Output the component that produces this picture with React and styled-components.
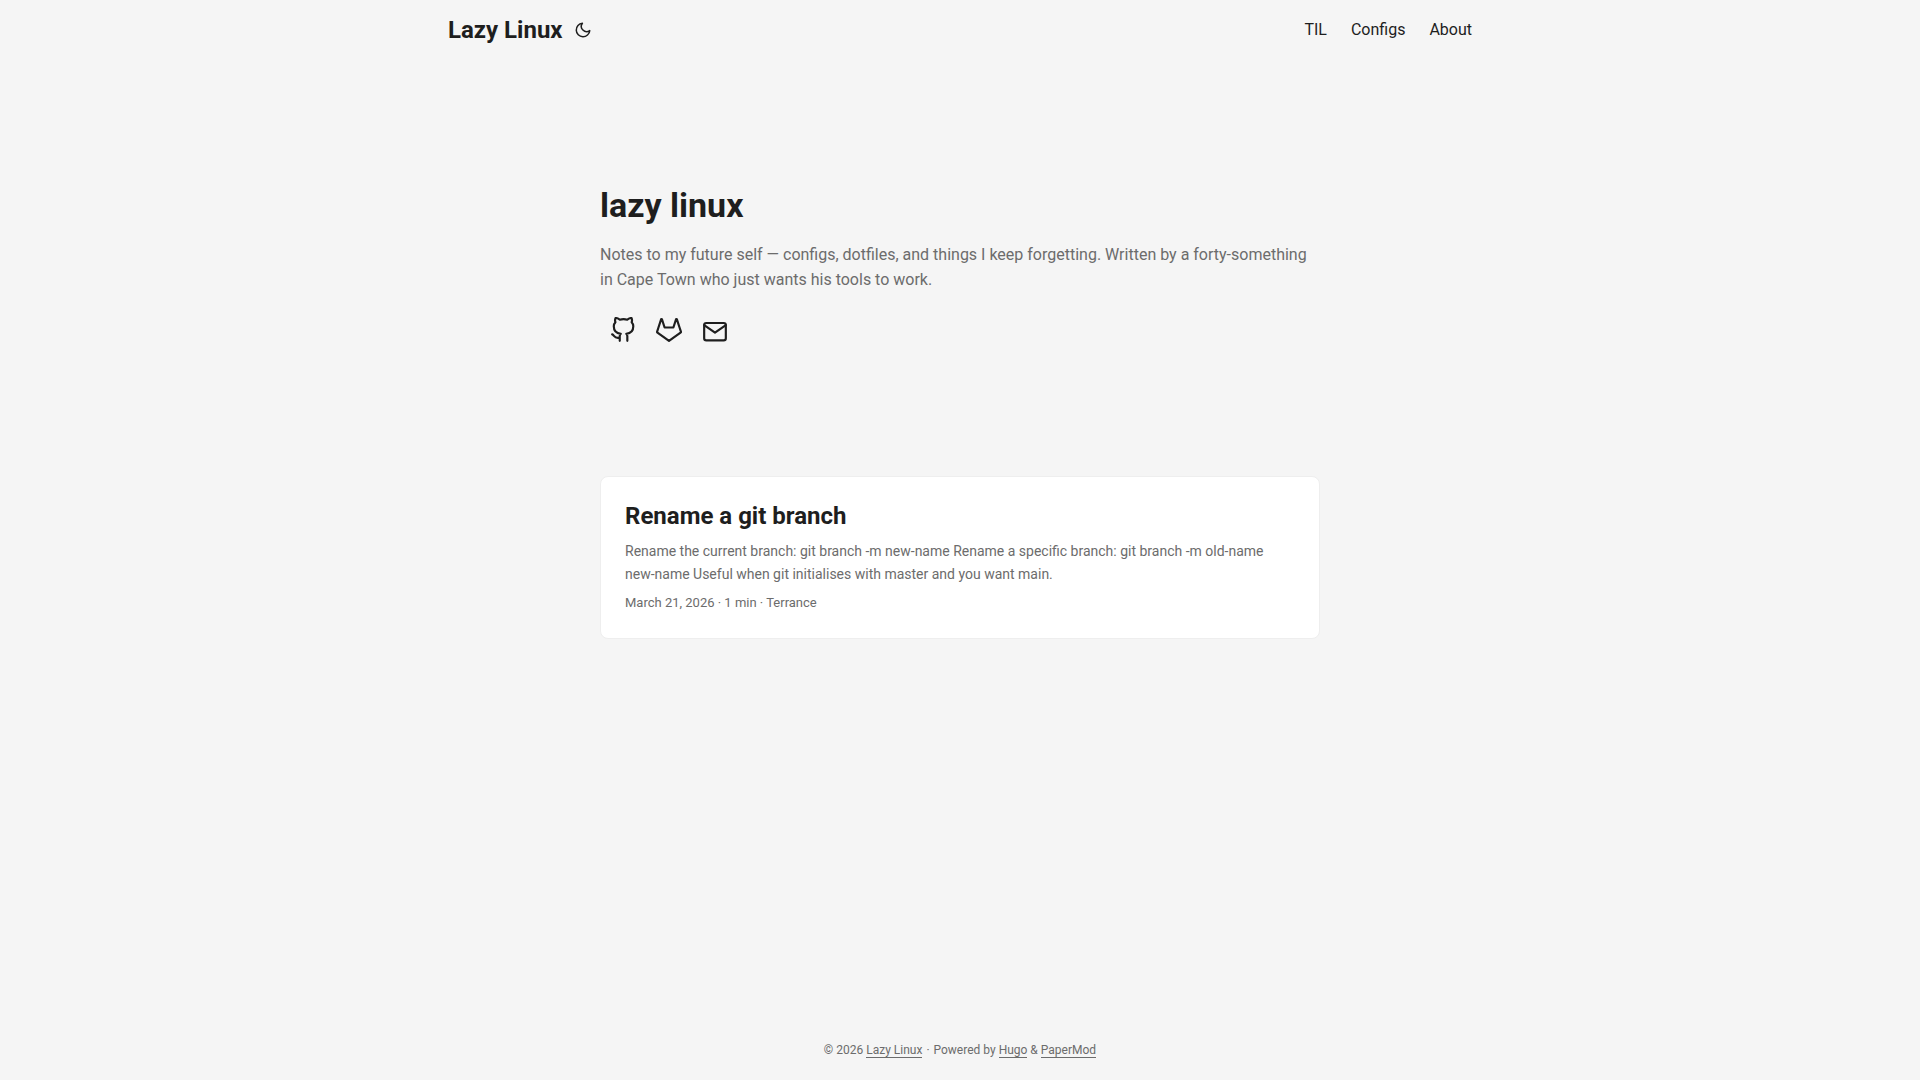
import React, { useState } from 'react';
import styled, { createGlobalStyle } from 'styled-components';

const theme = '#f5f5f5';
const entry = '#ffffff';
const primary = '#1e1e1e';
const secondary = '#6c6c6c';
const border = '#eeeeee';

const GlobalStyle = createGlobalStyle`
  *,
  *::before,
  *::after {
    box-sizing: border-box;
  }

  body {
    margin: 0;
    background: ${theme};
    color: ${primary};
    font-family: Roboto, 'Open Sans', 'Liberation Sans', sans-serif;
    font-size: 18px;
    line-height: 1.6;
  }

  h1, h2, p, ul {
    margin: 0;
    padding: 0;
  }

  a {
    color: inherit;
    text-decoration: none;
  }
`;

const Page = styled.div`
  display: flex;
  flex-direction: column;
  min-height: 100vh;
`;

const Nav = styled.nav`
  display: flex;
  flex-wrap: wrap;
  justify-content: space-between;
  width: 100%;
  max-width: 1072px;
  margin: 0 auto;
  padding: 0 24px;
  line-height: 60px;
`;

const Logo = styled.div`
  display: flex;
  align-items: center;
  gap: 11px;

  a {
    font-size: 24px;
    font-weight: 700;
  }
`;

const ThemeToggle = styled.button`
  display: flex;
  padding: 0;
  border: 0;
  background: none;
  color: inherit;
  cursor: pointer;
`;

const Menu = styled.ul`
  display: flex;
  gap: 24px;
  list-style: none;
  font-size: 16px;
  white-space: nowrap;
`;

const Main = styled.main`
  flex: 1;
  width: 100%;
  max-width: 768px;
  margin: 0 auto;
  padding: 24px;
`;

const Intro = styled.section`
  display: flex;
  flex-direction: column;
  justify-content: center;
  min-height: 320px;
  margin: 24px 0 48px;

  h1 {
    font-size: 34px;
    line-height: 44px;
  }

  p {
    margin: 15px 0;
    color: ${secondary};
    font-size: 16px;
    line-height: 25px;
  }
`;

const SocialLinks = styled.div`
  display: flex;

  a {
    display: flex;
    padding: 10px;
  }
`;

const Post = styled.article`
  padding: 24px;
  border: 1px solid ${border};
  border-radius: 8px;
  background: ${entry};
  color: ${secondary};

  h2 {
    color: ${primary};
    font-size: 24px;
    line-height: 31px;
  }
`;

const Summary = styled.p`
  && {
    margin: 8px 0 6px;
  }
  font-size: 14px;
  line-height: 23px;
`;

const Meta = styled.footer`
  font-size: 13px;
  line-height: 22px;
`;

const Footer = styled.footer`
  padding: 0 24px;
  color: ${secondary};
  font-size: 12px;
  line-height: 60px;
  text-align: center;

  a {
    border-bottom: 1px solid ${secondary};
  }
`;

const Separator = styled.span`
  padding: 0 1px;
`;

const Icon = ({ size, viewBox = '0 0 24 24', children }) => (
  <svg
    width={size}
    height={size}
    viewBox={viewBox}
    fill="none"
    stroke="currentColor"
    strokeWidth="2"
    strokeLinecap="round"
    strokeLinejoin="round"
    aria-hidden="true"
  >
    {children}
  </svg>
);

const MENU = [
  { name: 'TIL', url: '#til' },
  { name: 'Configs', url: '#configs' },
  { name: 'About', url: '#about' },
];

const SOCIAL = [
  {
    name: 'Github',
    url: '#github',
    icon: (
      <path d="M9 19c-5 1.5-5-2.5-7-3m14 6v-3.87a3.37 3.37 0 0 0-.94-2.61c3.14-.35 6.44-1.54 6.44-7A5.44 5.44 0 0 0 20 4.77 5.07 5.07 0 0 0 19.91 1S18.73.65 16 2.48a13.38 13.38 0 0 0-7 0C6.27.65 5.09 1 5.09 1A5.07 5.07 0 0 0 5 4.77a5.44 5.44 0 0 0-1.5 3.78c0 5.42 3.3 6.61 6.44 7A3.37 3.37 0 0 0 9 18.13V22" />
    ),
  },
  {
    name: 'Gitlab',
    url: '#gitlab',
    icon: (
      <path d="M22.65 14.39L12 22.13 1.35 14.39a.84.84 0 0 1-.3-.94l1.22-3.78 2.44-7.51A.42.42 0 0 1 4.82 2a.43.43 0 0 1 .58 0 .42.42 0 0 1 .11.18l2.44 7.49h8.1l2.44-7.51A.42.42 0 0 1 18.6 2a.43.43 0 0 1 .58 0 .42.42 0 0 1 .11.18l2.44 7.51L23 13.45a.84.84 0 0 1-.35.94z" />
    ),
  },
  {
    name: 'Email',
    url: 'mailto:',
    viewBox: '0 0 24 21',
    icon: (
      <>
        <path d="M4 4h16c1.1 0 2 .9 2 2v12c0 1.1-.9 2-2 2H4c-1.1 0-2-.9-2-2V6c0-1.1.9-2 2-2z" />
        <polyline points="22,6 12,13 2,6" />
      </>
    ),
  },
];

const App = () => {
  const [dark, setDark] = useState(false);

  return (
    <Page>
      <GlobalStyle />
      <header>
        <Nav>
          <Logo>
            <a href="#home">Lazy Linux</a>
            <ThemeToggle aria-label="Toggle theme" aria-pressed={dark} onClick={() => setDark(!dark)}>
              <Icon size={18}>
                <path d="M21 12.79A9 9 0 1 1 11.21 3 7 7 0 0 0 21 12.79z" />
              </Icon>
            </ThemeToggle>
          </Logo>
          <Menu>
            {MENU.map(({ name, url }) => (
              <li key={name}>
                <a href={url}>{name}</a>
              </li>
            ))}
          </Menu>
        </Nav>
      </header>
      <Main>
        <Intro>
          <h1>lazy linux</h1>
          <p>
            Notes to my future self — configs, dotfiles, and things I keep forgetting. Written by a forty-something in
            Cape Town who just wants his tools to work.
          </p>
          <SocialLinks>
            {SOCIAL.map(({ name, url, viewBox, icon }) => (
              <a key={name} href={url} aria-label={name}>
                <Icon size={26} viewBox={viewBox}>
                  {icon}
                </Icon>
              </a>
            ))}
          </SocialLinks>
        </Intro>
        <Post>
          <h2>Rename a git branch</h2>
          <Summary>
            Rename the current branch: git branch -m new-name Rename a specific branch: git branch -m old-name new-name
            Useful when git initialises with master and you want main.
          </Summary>
          <Meta>March 21, 2026 · 1 min · Terrance</Meta>
        </Post>
      </Main>
      <Footer>
        © 2026 <a href="#home">Lazy Linux</a> <Separator>·</Separator> Powered by <a href="#hugo">Hugo</a> &{' '}
        <a href="#papermod">PaperMod</a>
      </Footer>
    </Page>
  );
};

export default App;
